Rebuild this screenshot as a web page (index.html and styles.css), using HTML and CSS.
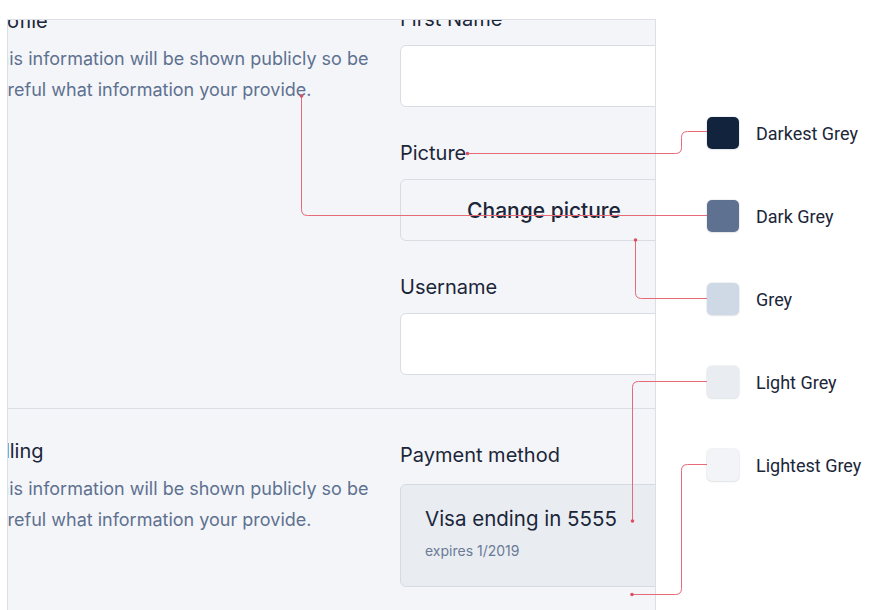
FILE: index.html
```html
<!DOCTYPE html>
<html lang="en">
<head>
<meta charset="utf-8">
<title>Colour usage</title>
<link rel="stylesheet" href="styles.css">
</head>
<body>
<div class="page">
  <div class="viewport">
    <div class="form">
      <section class="section">
        <div class="intro">
          <h2 class="section-title">Profile</h2>
          <p class="section-desc">This information will be shown publicly so be careful what information your provide.</p>
        </div>
        <div class="fields">
          <div class="field">
            <div class="field-label">First Name</div>
            <div class="input"></div>
          </div>
          <div class="field">
            <div class="field-label">Picture</div>
            <div class="btn">Change picture</div>
          </div>
          <div class="field">
            <div class="field-label">Username</div>
            <div class="input"></div>
          </div>
        </div>
      </section>
      <section class="section section--billing">
        <div class="intro">
          <h2 class="section-title">Billing</h2>
          <p class="section-desc">This information will be shown publicly so be careful what information your provide.</p>
        </div>
        <div class="fields">
          <div class="field">
            <div class="field-label field-label--card">Payment method</div>
            <div class="card">
              <div class="card-title">Visa ending in 5555</div>
              <div class="card-sub">expires 1/2019</div>
            </div>
          </div>
        </div>
      </section>
    </div>
  </div>
  <ul class="legend">
    <li class="legend-item"><span class="swatch swatch--darkest"></span><span class="legend-label">Darkest Grey</span></li>
    <li class="legend-item"><span class="swatch swatch--dark"></span><span class="legend-label">Dark Grey</span></li>
    <li class="legend-item"><span class="swatch swatch--grey"></span><span class="legend-label">Grey</span></li>
    <li class="legend-item"><span class="swatch swatch--light"></span><span class="legend-label">Light Grey</span></li>
    <li class="legend-item"><span class="swatch swatch--lightest"></span><span class="legend-label">Lightest Grey</span></li>
  </ul>
</div>
<svg class="callouts" width="879" height="610" viewBox="0 0 879 610" aria-hidden="true">
  <g fill="none" stroke="#e66a77" stroke-width="1">
    <path d="M467.5 153.5 H675.5 Q681.5 153.5 681.5 147.5 V137.5 Q681.5 131.5 687.5 131.5 H707"/>
    <path d="M301.5 96 V209.5 Q301.5 215.5 307.5 215.5 H707"/>
    <path d="M635.5 240 V292.5 Q635.5 298.5 641.5 298.5 H707"/>
    <path d="M707 381.5 H638.5 Q632.5 381.5 632.5 387.5 V521"/>
    <path d="M707 464.5 H687.5 Q681.5 464.5 681.5 470.5 V588.5 Q681.5 594.5 675.5 594.5 H632"/>
  </g>
  <g fill="#dc5064">
    <circle cx="467.5" cy="153.5" r="1.8"/>
    <circle cx="301.5" cy="96" r="1.8"/>
    <circle cx="635.5" cy="240" r="1.8"/>
    <circle cx="632.5" cy="521" r="1.8"/>
    <circle cx="632" cy="594.5" r="1.8"/>
  </g>
</svg>
</body>
</html>
```

FILE: styles.css
```css
* {
  box-sizing: border-box;
}

html, body {
  margin: 0;
  padding: 0;
  background: #ffffff;
}

body {
  position: relative;
  width: 879px;
  height: 610px;
  overflow: hidden;
  font-family: "Inter", "Noto Sans", sans-serif;
  color: #1b2639;
}

.page {
  display: flex;
  align-items: flex-start;
  padding: 19px 0 0 7px;
  height: 610px;
}

.viewport {
  flex-shrink: 0;
  width: 649px;
  height: 591px;
  background: #f4f5f8;
  border: 1px solid #dcdfe6;
  border-bottom: none;
  overflow: hidden;
}

.form {
  width: 701px;
  margin: -47px 0 0 -21px;
}

.section {
  display: grid;
  grid-template-columns: 395px 288px;
  column-gap: 18px;
  padding: 32px 0 33px;
}

.section--billing {
  border-top: 1px solid #dadee5;
  padding-bottom: 40px;
}

.intro {
  padding-top: 6px;
}

.section--billing .intro {
  padding-top: 0;
}

.section-title {
  margin: 0 0 12px;
  font-size: 20px;
  line-height: 20px;
  font-weight: 400;
  color: #1b2639;
}

.section-desc {
  margin: 0;
  font-size: 18px;
  line-height: 31px;
  color: #5e7191;
}

.fields {
  display: flex;
  flex-direction: column;
  gap: 32px;
}

.field-label {
  font-size: 20px;
  line-height: 28px;
  margin-bottom: 12px;
  color: #1b2639;
}

.field-label--card {
  margin-bottom: 15px;
}

.input {
  height: 62px;
  background: #ffffff;
  border: 1px solid #d8dce3;
  border-radius: 6px;
}

.btn {
  height: 62px;
  display: flex;
  align-items: center;
  justify-content: center;
  background: #f4f5f8;
  border: 1px solid #d8dce3;
  border-radius: 6px;
  font-size: 21px;
  font-weight: 500;
  color: #1b2639;
}

.card {
  padding: 20px 24px 23px;
  background: #e9edf2;
  border: 1px solid #d6dbe3;
  border-radius: 6px;
}

.card-title {
  font-size: 20.5px;
  line-height: 28px;
  color: #1b2639;
}

.card-sub {
  margin-top: 6px;
  font-size: 14px;
  line-height: 24px;
  color: #6a7b96;
}

.legend {
  list-style: none;
  margin: 98px 0 0 51px;
  padding: 0;
  display: flex;
  flex-direction: column;
  gap: 51px;
}

.legend-item {
  display: flex;
  align-items: center;
  gap: 17px;
  height: 32px;
}

.swatch {
  width: 32px;
  height: 32px;
  border-radius: 5px;
  box-shadow: 0 0 0 1px rgba(30, 45, 70, 0.06), 0 1px 2px rgba(30, 45, 70, 0.08);
}

.swatch--darkest { background: #12233d; }
.swatch--dark { background: #5e7191; }
.swatch--grey { background: #cfd9e6; }
.swatch--light { background: #e9edf2; }
.swatch--lightest { background: #f3f4f8; }

.legend-label {
  font-family: "Roboto", "Noto Sans", sans-serif;
  font-size: 18px;
  color: #1b2639;
}

.callouts {
  position: absolute;
  top: 0;
  left: 0;
  pointer-events: none;
}
```
